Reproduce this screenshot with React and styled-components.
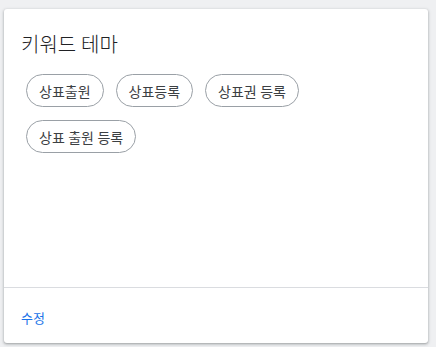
import React from "react";
import styled, { createGlobalStyle } from "styled-components";

const Global = createGlobalStyle`
  body {
    margin: 0;
    background: #eff0f2;
    font-family: Roboto, "Noto Sans CJK KR", sans-serif;
  }
`;

const Page = styled.div`
  padding: 9px 8px 4px 4px;
`;

const Card = styled.div`
  width: 424px;
  height: 334px;
  background: #fff;
  border-radius: 3px;
  box-shadow: 0 1px 2px rgba(60, 64, 67, 0.3), 0 1px 3px 1px rgba(60, 64, 67, 0.15);
  display: flex;
  flex-direction: column;
`;

const Body = styled.div`
  flex: 1;
  padding: 22px 17px 0 17px;
`;

const Title = styled.h2`
  margin: 0 0 15px;
  font-size: 20px;
  font-weight: 300;
  line-height: 28px;
  color: #202124;
`;

const Chips = styled.div`
  display: flex;
  flex-wrap: wrap;
  gap: 13px 12px;
  padding-left: 5px;
`;

const Chip = styled.span`
  display: inline-flex;
  align-items: center;
  box-sizing: border-box;
  height: 33px;
  padding: 0 12px;
  border: 1px solid #9aa0a6;
  border-radius: 17px;
  font-size: 14px;
  color: #3c4043;
`;

const Footer = styled.div`
  height: 55px;
  border-top: 1px solid #dadce0;
  display: flex;
  align-items: center;
  padding: 0 17px;
`;

const Action = styled.span`
  font-size: 13px;
  color: #1a73e8;
  cursor: pointer;
  margin-top: 4px;
`;

const keywords = ["상표출원", "상표등록", "상표권 등록", "상표 출원 등록"];

export default function App() {
  return (
    <Page>
      <Global />
      <Card>
        <Body>
          <Title>키워드 테마</Title>
          <Chips>
            {keywords.map((k) => (
              <Chip key={k}>{k}</Chip>
            ))}
          </Chips>
        </Body>
        <Footer>
          <Action>수정</Action>
        </Footer>
      </Card>
    </Page>
  );
}
